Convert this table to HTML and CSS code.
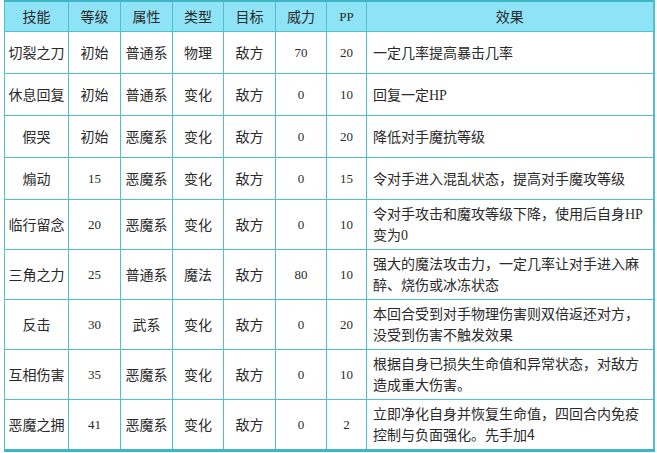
FILE: index.html
```html
<!DOCTYPE html>
<html lang="zh-CN">
<head>
<meta charset="utf-8">
<title>技能表</title>
<link rel="stylesheet" href="styles.css">
</head>
<body>
<table class="skills">
  <colgroup>
    <col class="c-name"><col class="c-lv"><col class="c-attr"><col class="c-type"><col class="c-target"><col class="c-pow"><col class="c-pp"><col class="c-eff">
  </colgroup>
  <thead>
    <tr><th>技能</th><th>等级</th><th>属性</th><th>类型</th><th>目标</th><th>威力</th><th class="num">PP</th><th>效果</th></tr>
  </thead>
  <tbody>
    <tr><td>切裂之刀</td><td>初始</td><td>普通系</td><td>物理</td><td>敌方</td><td class="num">70</td><td class="num">20</td><td class="eff">一定几率提高暴击几率</td></tr>
    <tr><td>休息回复</td><td>初始</td><td>普通系</td><td>变化</td><td>敌方</td><td class="num">0</td><td class="num">10</td><td class="eff">回复一定<span class="lat">HP</span></td></tr>
    <tr><td>假哭</td><td>初始</td><td>恶魔系</td><td>变化</td><td>敌方</td><td class="num">0</td><td class="num">20</td><td class="eff">降低对手魔抗等级</td></tr>
    <tr><td>煽动</td><td class="num">15</td><td>恶魔系</td><td>变化</td><td>敌方</td><td class="num">0</td><td class="num">15</td><td class="eff">令对手进入混乱状态，提高对手魔攻等级</td></tr>
    <tr><td>临行留念</td><td class="num">20</td><td>恶魔系</td><td>变化</td><td>敌方</td><td class="num">0</td><td class="num">10</td><td class="eff">令对手攻击和魔攻等级下降，使用后自身<span class="lat">HP</span>变为<span class="lat">0</span></td></tr>
    <tr><td>三角之力</td><td class="num">25</td><td>普通系</td><td>魔法</td><td>敌方</td><td class="num">80</td><td class="num">10</td><td class="eff">强大的魔法攻击力，一定几率让对手进入麻醉、烧伤或冰冻状态</td></tr>
    <tr><td>反击</td><td class="num">30</td><td>武系</td><td>变化</td><td>敌方</td><td class="num">0</td><td class="num">20</td><td class="eff">本回合受到对手物理伤害则双倍返还对方，没受到伤害不触发效果</td></tr>
    <tr><td>互相伤害</td><td class="num">35</td><td>恶魔系</td><td>变化</td><td>敌方</td><td class="num">0</td><td class="num">10</td><td class="eff">根据自身已损失生命值和异常状态，对敌方造成重大伤害。</td></tr>
    <tr><td>恶魔之拥</td><td class="num">41</td><td>恶魔系</td><td>变化</td><td>敌方</td><td class="num">0</td><td class="num">2</td><td class="eff">立即净化自身并恢复生命值，四回合内免疫控制与负面强化。先手加4</td></tr>
  </tbody>
</table>
</body>
</html>
```
FILE: styles.css
```css
html, body {
  margin: 0;
  padding: 0;
  background: #ffffff;
}

body {
  padding-left: 4px;
  font-family: "Noto Sans CJK SC", sans-serif;
  color: #2a2a2a;
}

.skills {
  border-collapse: collapse;
  table-layout: fixed;
  width: 649px;
  border-top: 2px solid #3fb6c6;
  border-bottom: 3px solid #3fb6c6;
  border-left: 1px solid #52c0c8;
  border-right: 2px solid #52c0c8;
}

.c-name { width: 64px; }
.c-lv { width: 52px; }
.c-attr { width: 52px; }
.c-type { width: 51px; }
.c-target { width: 52px; }
.c-pow { width: 51px; }
.c-pp { width: 40px; }
.c-eff { width: 287px; }

.skills th,
.skills td {
  border: 1px solid #52c0c8;
  font-family: "Noto Sans CJK SC", sans-serif;
  font-size: 14px;
  font-weight: normal;
  line-height: 21px;
  text-align: center;
  padding: 0 2px;
  color: #2a2a2a;
}

.skills th {
  background: #8fe3f7;
  height: 29px;
}

.skills td {
  height: 34px;
  padding-top: 3px;
  padding-bottom: 4px;
}

.skills .num {
  font-family: "Liberation Serif", serif;
  font-size: 13px;
}

.skills td.eff {
  text-align: left;
  padding-left: 6px;
  padding-right: 6px;
}

.lat {
  font-family: "Liberation Serif", serif;
  line-height: 14px;
}
```
